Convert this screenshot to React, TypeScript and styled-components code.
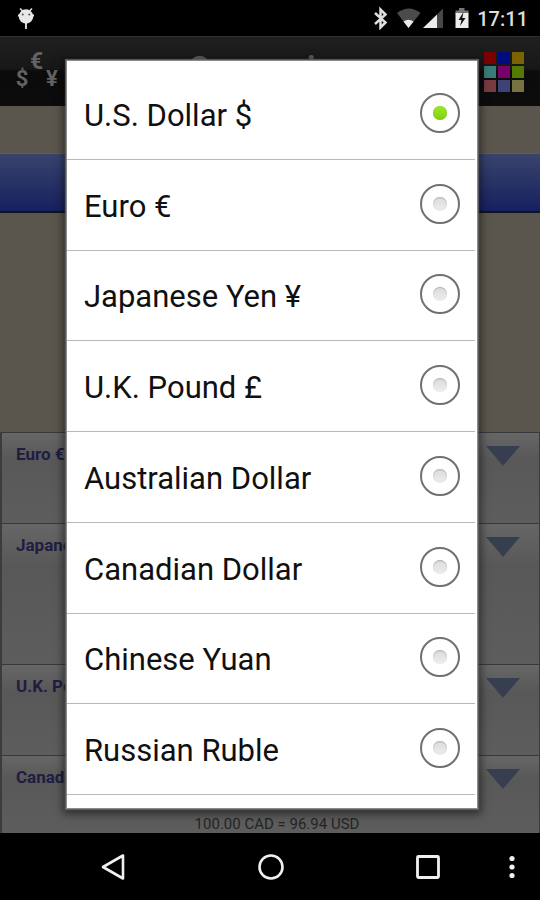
import React, { useState } from "react";
import styled, { createGlobalStyle } from "styled-components";

const GlobalStyle = createGlobalStyle`
  *, *::before, *::after { box-sizing: border-box; }
  body { margin: 0; background: #000; font-family: Roboto, "Liberation Sans", sans-serif; }
  button { border: 0; padding: 0; background: none; font: inherit; color: inherit; cursor: pointer; }
`;

const Screen = styled.div`
  position: relative;
  display: flex;
  flex-direction: column;
  min-height: 100vh;
  overflow: hidden;
`;

const StatusBar = styled.div`
  display: flex;
  align-items: center;
  height: 36px;
  padding: 0 12px 0 16px;
  background: #000;
  color: #dedede;
`;

const StatusIcons = styled.div`
  display: flex;
  align-items: center;
  margin-left: auto;
`;

const Clock = styled.time`
  margin-left: 8px;
  padding-top: 2px;
  font-size: 20px;
  line-height: 24px;
  font-weight: 500;
`;

const AppHeader = styled.header`
  display: grid;
  grid-template-columns: 48px 1fr 48px;
  align-items: center;
  height: 70px;
  padding: 0 12px;
  border-top: 1px solid #303030;
  background: linear-gradient(#202020, #171717 46%, #0b0b0b 50%, #0c0c0c);
`;

const Title = styled.h1`
  margin: 0;
  padding-bottom: 10px;
  color: #606060;
  font-size: 32px;
  line-height: 40px;
  font-weight: 700;
  text-align: center;
`;

const Palette = styled.button`
  display: grid;
  grid-template-columns: repeat(3, 12px);
  gap: 2px;
  justify-self: end;
  padding-right: 4px;
`;

const Swatch = styled.span<{ $color: string }>`
  height: 12px;
  background: ${(p) => p.$color};
`;

const Main = styled.main`
  display: flex;
  flex: 1;
  flex-direction: column;
  background: #5a564d;
`;

const Toolbar = styled.div`
  height: 60px;
  margin-top: 47px;
  border-top: 1px solid #555c73;
  border-bottom: 2px solid #11131f;
  background: linear-gradient(#39446c, #16205f);
`;

const Rates = styled.section`
  margin-top: auto;
  border: solid #3c3c3c;
  border-width: 0 1px 0 2px;
`;

const RateRow = styled.div<{ $height: number }>`
  display: flex;
  flex-wrap: wrap;
  justify-content: space-between;
  align-content: space-between;
  height: ${(p) => p.$height}px;
  padding: 11px 19px 0 14px;
  border-top: 1px solid #393939;
  background: linear-gradient(#666, #585858 30%, #5d5d5d);
`;

const RateName = styled.span`
  color: #1f1d42;
  font-size: 17px;
  line-height: 20px;
  font-weight: 700;
`;

const Expand = styled.button`
  display: flex;
  padding-top: 2px;
`;

const RateValue = styled.span`
  flex-basis: 100%;
  padding-left: 18px;
  color: #242424;
  font-size: 15px;
  line-height: 18px;
  text-align: center;
`;

const NavBar = styled.nav`
  display: flex;
  align-items: center;
  justify-content: space-between;
  height: 67px;
  padding: 0 24px 0 99px;
  background: #000;
`;

const NavButton = styled.button`
  display: flex;
`;

const MoreGroup = styled.div`
  display: flex;
  align-items: center;
  gap: 66px;
`;

const Overlay = styled.div`
  position: absolute;
  inset: 60px 62px 91px 66px;
  display: flex;
`;

const Dialog = styled.fieldset`
  display: grid;
  grid-auto-rows: 1fr;
  flex: 1;
  min-width: 0;
  margin: 0;
  padding: 8px 2px 13px 0;
  border: 1px solid #8b8b8b;
  background: #fff;
  box-shadow: 0 0 1px 1px rgba(110, 110, 110, 0.7), 0 2px 8px 3px rgba(0, 0, 0, 0.5);
`;

const Option = styled.label`
  display: flex;
  align-items: center;
  justify-content: space-between;
  padding: 0 15px 2px 17px;
  border-bottom: 1px solid #b8b8b8;
  color: #101010;
  font-size: 31px;
  line-height: 36px;
  cursor: pointer;
`;

const OptionName = styled.span`
  padding-top: 6px;
`;

const Radio = styled.input`
  appearance: none;
  flex: none;
  width: 40px;
  height: 40px;
  margin: 0;
  border: 2px solid #707070;
  border-radius: 50%;
  display: grid;
  place-items: center;
  cursor: pointer;

  &::before {
    content: "";
    width: 14px;
    height: 14px;
    border-radius: 50%;
    background: linear-gradient(#dcdcdc, #ececec);
    box-shadow: inset 0 1px 1px #b0b0b0;
  }
  &:checked::before {
    background: linear-gradient(#9be82a, #7fd010);
    box-shadow: inset 0 0 1px #6fb010;
  }
`;

const swatches = [
  "#7c0000", "#000b80", "#7a6400",
  "#397b78", "#76006c", "#547b00",
  "#783b40", "#3d4475", "#777242",
];

const rates = [
  { name: "Euro €", height: 91 },
  { name: "Japanese Yen ¥", height: 141 },
  { name: "U.K. Pound £", height: 91 },
  { name: "Canadian Dollar", height: 78, value: "100.00 CAD = 96.94 USD" },
];

const currencies = [
  "U.S. Dollar $",
  "Euro €",
  "Japanese Yen ¥",
  "U.K. Pound £",
  "Australian Dollar",
  "Canadian Dollar",
  "Chinese Yuan",
  "Russian Ruble",
];

const DroidIcon = () => (
  <svg width="20" height="24" viewBox="0 0 20 24" aria-hidden="true">
    <path d="M4 2.500l3 3M16 2.500l-3 3" stroke="#e8e8e8" strokeWidth="1.500" />
    <circle cx="10" cy="10.500" r="7.200" fill="#e8e8e8" />
    <path d="M2 9.500h2M16 9.500h2M10 17v6" stroke="#e8e8e8" strokeWidth="1.800" />
    <circle cx="6.700" cy="8.400" r="1" fill="#555" />
    <circle cx="13.300" cy="8.400" r="1" fill="#555" />
  </svg>
);

const SystemIcons = () => (
  <svg width="98" height="24" viewBox="371 6 98 24" aria-hidden="true">
    <path d="M375 13l10.500 9.500-5 5V9.500l5 5L375 24" fill="none" stroke="#dedede" strokeWidth="2.500" />
    <path d="M397 13q12-9 23.500 0L408.500 28z" fill="#4b4b4b" />
    <path d="M403.500 21.500q5-3.500 10 0L408.500 28z" fill="#ececec" />
    <path d="M423 28L437 14.500V28z" fill="#ececec" />
    <path d="M437 14.500L443 8.500V28h-6z" fill="#474747" />
    <path d="M459 8h5.500v2.500h4V14h-13v-3.500h3.500z" fill="#777" />
    <path d="M455.500 13h13v15h-13z" fill="#ececec" />
    <path d="M463.500 12l-5 8h3l-1.500 6 5.500-8h-3.200z" fill="#111" />
  </svg>
);

const CurrencyLogo = () => (
  <svg width="48" height="60" viewBox="12 40 48 60" role="img" aria-label="Currencies">
    <g fill="#626262" fontFamily="Roboto, sans-serif" fontWeight="700" textAnchor="middle">
      <text x="36.500" y="67" fontSize="23">€</text>
      <text x="22" y="84" fontSize="22">$</text>
      <text x="52" y="84" fontSize="22">¥</text>
    </g>
  </svg>
);

export default function App() {
  const [selected, setSelected] = useState(currencies[0]);

  return (
    <Screen>
      <GlobalStyle />
      <StatusBar>
        <DroidIcon />
        <StatusIcons>
          <SystemIcons />
          <Clock>17:11</Clock>
        </StatusIcons>
      </StatusBar>

      <AppHeader>
        <CurrencyLogo />
        <Title>Conversion</Title>
        <Palette aria-label="Choose colour theme">
          {swatches.map((color) => (
            <Swatch key={color} $color={color} />
          ))}
        </Palette>
      </AppHeader>

      <Main>
        <Toolbar />
        <Rates>
          {rates.map((rate) => (
            <RateRow key={rate.name} $height={rate.height}>
              <RateName>{rate.name}</RateName>
              <Expand aria-label={`Options for ${rate.name}`}>
                <svg width="34" height="20" viewBox="0 0 34 20">
                  <path d="M0 0h34L17 20z" fill="#373e4f" />
                </svg>
              </Expand>
              {rate.value && <RateValue>{rate.value}</RateValue>}
            </RateRow>
          ))}
        </Rates>
      </Main>

      <NavBar>
        <NavButton aria-label="Back">
          <svg width="28" height="30" viewBox="0 0 28 30">
            <path d="M4 15L24 3.500v23z" fill="none" stroke="#f0f0f0" strokeWidth="2.600" strokeLinejoin="round" />
          </svg>
        </NavButton>
        <NavButton aria-label="Home">
          <svg width="28" height="28" viewBox="0 0 28 28">
            <circle cx="14" cy="14" r="11.500" fill="none" stroke="#f0f0f0" strokeWidth="2.600" />
          </svg>
        </NavButton>
        <MoreGroup>
          <NavButton aria-label="Recent apps">
            <svg width="28" height="28" viewBox="0 0 28 28">
              <rect x="3.500" y="3.500" width="21" height="21" rx="1" fill="none" stroke="#f0f0f0" strokeWidth="2.800" />
            </svg>
          </NavButton>
          <NavButton aria-label="More">
            <svg width="8" height="26" viewBox="0 0 8 26">
              <g fill="#f0f0f0">
                <circle cx="4" cy="4.500" r="2.600" />
                <circle cx="4" cy="13" r="2.600" />
                <circle cx="4" cy="21.500" r="2.600" />
              </g>
            </svg>
          </NavButton>
        </MoreGroup>
      </NavBar>

      <Overlay role="dialog" aria-label="Select currency">
        <Dialog>
          {currencies.map((name) => (
            <Option key={name}>
              <OptionName>{name}</OptionName>
              <Radio
                type="radio"
                name="currency"
                value={name}
                checked={selected === name}
                onChange={() => setSelected(name)}
              />
            </Option>
          ))}
        </Dialog>
      </Overlay>
    </Screen>
  );
}
